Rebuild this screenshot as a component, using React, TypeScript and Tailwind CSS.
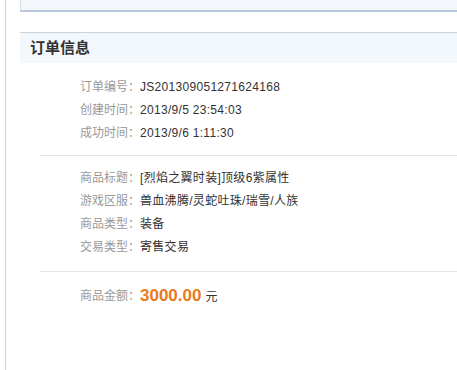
const font = "font-['Liberation_Sans','Noto_Sans_CJK_SC',sans-serif]";

const Row = ({ label, value }: { label: string; value: string }) => (
  <div className="flex h-[23px] items-center text-[12px]">
    <span className="w-[60px] shrink-0 text-[#999]">{label}</span>
    <span className="tracking-[0.3px] text-[#333]">{value}</span>
  </div>
);

const App = () => {
  return (
    <div className={`h-[370px] w-[457px] overflow-hidden bg-white ${font}`}>
      <div className="ml-[5px] h-full border-l border-[#c9d4e1] pl-[14px]">
        {/* bottom of the box above */}
        <div className="h-[12px] border-b-2 border-l border-[#b9c9dc] border-l-[#d3dce7] bg-[#f3f6fa]" />

        <div className="mt-[20px] flex h-[31px] items-center border-t border-[#c8d4e0] bg-[#f3f8fd] pl-[10px]">
          <h3 className="text-[15px] font-bold text-[#333]">订单信息</h3>
        </div>

        <div className="ml-[20px] border-b border-[#e6e6e6] pb-[11px] pl-[40px] pt-[12px]">
          <Row label="订单编号：" value="JS201309051271624168" />
          <Row label="创建时间：" value="2013/9/5 23:54:03" />
          <Row label="成功时间：" value="2013/9/6 1:11:30" />
        </div>

        <div className="ml-[20px] border-b border-[#e6e6e6] pb-[13px] pl-[40px] pt-[10px]">
          <Row label="商品标题：" value="[烈焰之翼时装]顶级6紫属性" />
          <Row label="游戏区服：" value="兽血沸腾/灵蛇吐珠/瑞雪/人族" />
          <Row label="商品类型：" value="装备" />
          <Row label="交易类型：" value="寄售交易" />
        </div>

        <div className="ml-[20px] pl-[40px] pt-[12px]">
          <div className="flex h-[23px] items-center text-[12px]">
            <span className="w-[60px] shrink-0 text-[#999]">商品金额：</span>
            <span className="text-[17px] font-bold text-[#e97a1e]">3000.00</span>
            <span className="ml-[4px] mt-[3px] text-[#333]">元</span>
          </div>
        </div>
      </div>
    </div>
  );
};

export default App;
